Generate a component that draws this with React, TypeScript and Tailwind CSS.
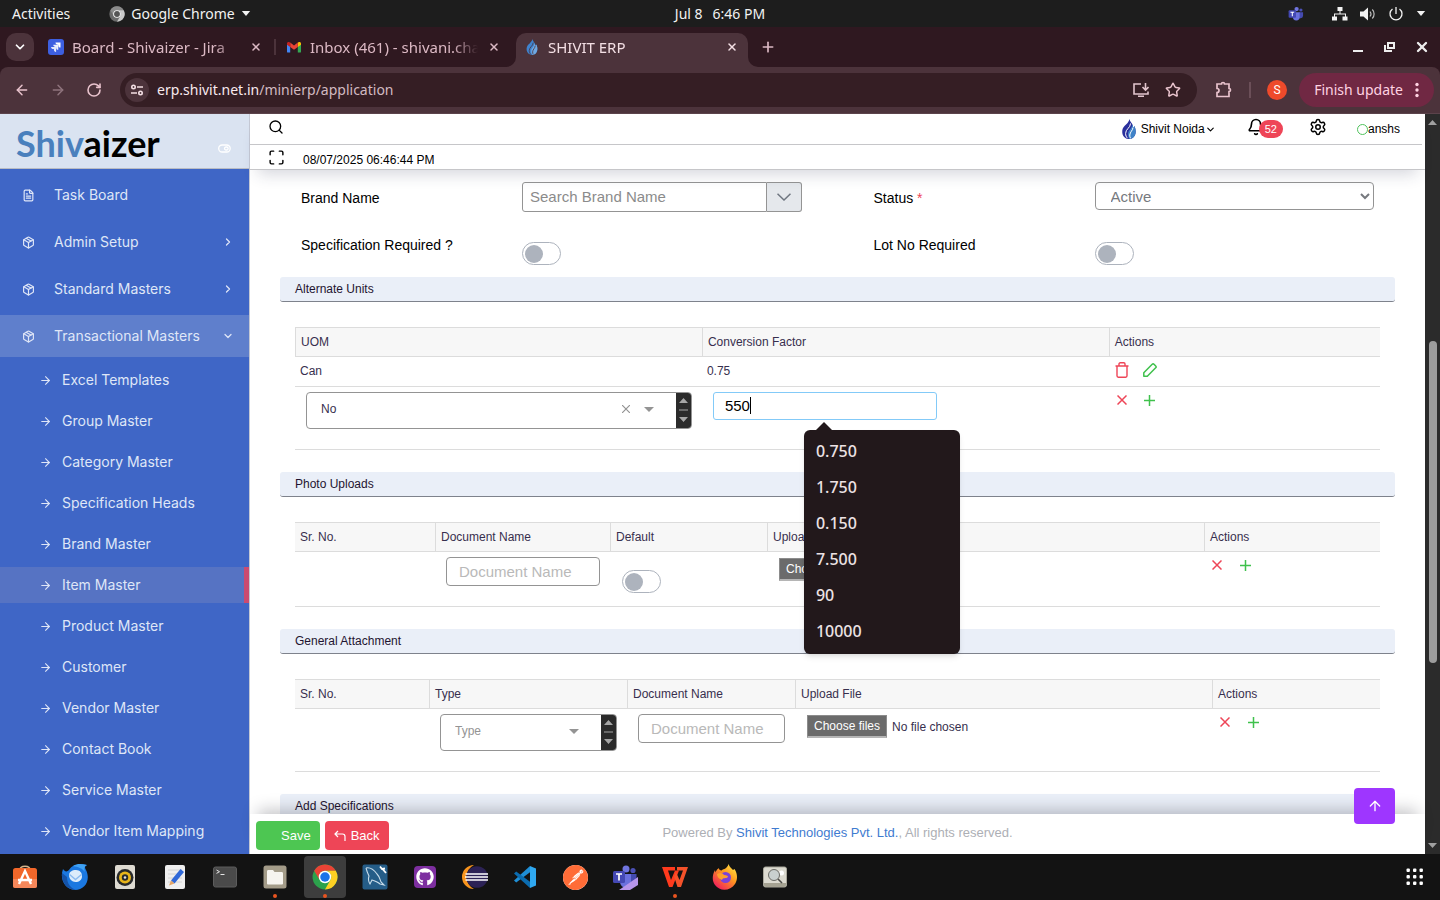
import type { ReactNode } from "react";
import {
  ArrowLeft,
  ArrowRight,
  ArrowUp,
  Bell,
  ChevronDown,
  ChevronRight,
  FileText,
  Maximize,
  Package,
  Plus,
  RotateCw,
  Search,
  Settings,
  Star,
  X,
} from "lucide-react";
import { SiPostman } from "react-icons/si";
import { FaGithub } from "react-icons/fa";

const MENU = ["Admin Setup", "Standard Masters"];

const SUB_MENU = [
  "Excel Templates",
  "Group Master",
  "Category Master",
  "Specification Heads",
  "Brand Master",
  "Item Master",
  "Product Master",
  "Customer",
  "Vendor Master",
  "Contact Book",
  "Service Master",
  "Vendor Item Mapping",
];

const SUGGESTIONS = ["0.750", "1.750", "0.150", "7.500", "90", "10000"];

/* ---------- logos ---------- */

function FlameLogo({ className, from, to, gap }: { className: string; from: string; to: string; gap: string }) {
  return (
    <svg viewBox="0 0 14 20" className={className} aria-hidden>
      <path d="M7.500 0c.3 2.500 2.500 4 3.200 6 .3 1 .4 1.800.3 2.500.8-.3 1.200-.8 1.400-1.500C13.600 9.500 14 12 13.500 14.500 12.800 18 10 20 7 20S1 18 .4 14.500C-.1 11.500.6 9 2.500 7 4.500 5 7 3 7.500 0z" fill={from} />
      <path d="M10 6c.5 3-3.800 5-4 9 0 2 .5 3.500 1.500 5 3-.2 5.300-2.200 6-5.500C14 12 13.600 9.500 12.400 7c-.2.700-.6 1.200-1.400 1.500.1-.7 0-1.500-.2-2.500z" fill={to} />
      <path d="M8.500 4.500C8.500 9 3.500 10 3.600 14.500c0 2 .7 3.500 1.900 4.700M11 8.500c-.2 3-3 4.500-3.200 7.500-.1 1.300.2 2.300.7 3.300" fill="none" stroke={gap} strokeWidth="1" />
    </svg>
  );
}

function JiraLogo() {
  return (
    <svg viewBox="0 0 16 16" className="size-4" aria-hidden>
      <rect width="16" height="16" rx="3" fill="#3d5fe0" />
      <path d="M7.500 3.500h5v5c-1.500 0-2.200-.9-2.200-2.300v-.5h-.6c-1.300 0-2.200-.8-2.200-2.200z" fill="#fff" />
      <path d="M5.300 5.700h5v5c-1.500 0-2.200-.9-2.200-2.300v-.5h-.6c-1.300 0-2.200-.8-2.200-2.200z" fill="#fff" opacity=".9" />
      <path d="M3.100 7.900h5v5c-1.500 0-2.200-.9-2.200-2.300v-.5h-.6c-1.300 0-2.200-.8-2.200-2.200z" fill="#fff" opacity=".85" />
    </svg>
  );
}

function GmailLogo() {
  return (
    <svg viewBox="0 0 16 16" className="size-4" aria-hidden>
      <path d="M1 4.500v8.200c0 .5.400.9.900.9h2.300V7z" fill="#4285f4" />
      <path d="M15 4.500v8.200c0 .5-.4.900-.9.900h-2.300V7z" fill="#34a853" />
      <path d="M11.800 3.600V8L15 5.700V4.500c0-1.400-1.400-2-2.400-1.300z" fill="#fbbc04" />
      <path d="M4.200 8V3.600L8 6.500l3.800-2.900V8L8 10.800z" fill="#ea4335" />
      <path d="M1 4.500v1.200L4.200 8V3.600l-.8-.4C2.400 2.500 1 3.100 1 4.500z" fill="#c5221f" />
    </svg>
  );
}

function ChromeLogo({ grey, className }: { grey?: boolean; className: string }) {
  const c = grey
    ? ["#8a8a8a", "#6b6b6b", "#c9c9c9", "#555555"]
    : ["#ea4335", "#2ca24c", "#fdd023", "#1a73e8"];
  return (
    <svg viewBox="0 0 48 48" className={className} aria-hidden>
      <circle cx="24" cy="24" r="23" fill={c[1]} />
      <path d="M4.080 12.500A23 23 0 0 1 43.920 12.500H24a11.500 11.500 0 0 0-9.960 17.250z" fill={c[0]} />
      <path d="M43.920 12.500A23 23 0 0 1 24 47l9.960-17.250A11.500 11.500 0 0 0 24 12.500z" fill={c[2]} />
      <circle cx="24" cy="24" r="11.500" fill="#fff" />
      <circle cx="24" cy="24" r="8.800" fill={c[3]} />
    </svg>
  );
}

function TeamsLogo({ className, preview }: { className: string; preview?: boolean }) {
  return (
    <svg viewBox="0 0 26 26" className={className} aria-hidden>
      <circle cx="21" cy="6.500" r="2.600" fill="#4b50b5" />
      <circle cx="14" cy="5" r="3.500" fill="#7075e0" />
      <path d="M18 10h6.500v6a4 4 0 0 1-4 4H18z" fill="#444ab0" />
      <path d="M8 10h11v8a5.500 5.500 0 0 1-11 0z" fill="#6a70dd" />
      <rect x="1" y="7" width="12" height="12" rx="1.500" fill="#4448b4" />
      <path d="M4 10h6M7 10v6.500" stroke="#fff" strokeWidth="1.700" />
      {preview && <path d="M7 26 26 13v8l-8 5z" fill="#b795ea" />}
    </svg>
  );
}

/* ---------- desktop top bar ---------- */

function DesktopBar() {
  return (
    <header className="relative flex h-[27px] shrink-0 items-center bg-[#1d1d1d] px-3 text-sm text-[#f2f2f2]">
      <button>Activities</button>
      <button className="ml-[39px] flex items-center gap-1.5">
        <ChromeLogo grey className="size-4" />
        Google Chrome
        <svg viewBox="0 0 10 6" className="h-[5px] w-[10px]" aria-hidden>
          <path d="M0 0h10L5 6z" fill="#f2f2f2" />
        </svg>
      </button>
      <div className="pointer-events-none absolute inset-x-0 flex justify-center gap-2.5">
        <span>Jul 8</span>
        <span>6:46 PM</span>
      </div>
      <div className="ml-auto flex items-center gap-3 pr-0.5">
        <TeamsLogo className="mr-4 size-4" />
        <svg viewBox="0 0 16 14" className="h-[14px] w-4" fill="#f2f2f2" aria-hidden>
          <path d="M5.500 0h5v4h-5zM0 9.500h5v4H0zM10.500 9.500h5v4h-5zM7.500 4h1v3h-1zM2 6.500h12v1H2zM2 7h1v3H2zM13 7h1v3h-1z" />
        </svg>
        <svg viewBox="0 0 16 14" className="h-[14px] w-4" aria-hidden>
          <path d="M0 4.500h3.500L8 .5v13L3.500 9.500H0z" fill="#f2f2f2" />
          <path d="M10 4.500c1.200 1.500 1.200 3.500 0 5M12.300 2.500c2.400 2.500 2.400 6.500 0 9" fill="none" stroke="#bbb" strokeWidth="1.200" />
        </svg>
        <svg viewBox="0 0 16 16" className="size-4" aria-hidden>
          <path d="M4.500 3a6 6 0 1 0 7 0M8 1v7" fill="none" stroke="#f2f2f2" strokeWidth="1.300" />
        </svg>
        <svg viewBox="0 0 10 6" className="h-[5px] w-[10px]" aria-hidden>
          <path d="M0 0h10L5 6z" fill="#f2f2f2" />
        </svg>
      </div>
    </header>
  );
}

/* ---------- browser chrome ---------- */

function Tab({ icon, title, active }: { icon: ReactNode; title: string; active?: boolean }) {
  return (
    <div
      className={
        active
          ? "relative flex h-full w-[232px] items-center gap-2 rounded-t-[10px] bg-[#4c333b] px-2 pb-1.5 text-[#f3dfe4]"
          : "flex h-full w-[232px] items-center gap-2 px-2 pb-1.5 text-[#dcb9c4]"
      }
    >
      {active && (
        <>
          <svg viewBox="0 0 10 10" className="absolute -left-2.5 bottom-0 size-2.5" aria-hidden>
            <path d="M10 0v10H0A10 10 0 0 0 10 0z" fill="#4c333b" />
          </svg>
          <svg viewBox="0 0 10 10" className="absolute -right-2.5 bottom-0 size-2.5" aria-hidden>
            <path d="M0 0v10h10A10 10 0 0 1 0 0z" fill="#4c333b" />
          </svg>
        </>
      )}
      <span className="flex w-4 shrink-0 justify-center">{icon}</span>
      <span className="min-w-0 flex-1 overflow-hidden whitespace-nowrap [mask-image:linear-gradient(to_right,#000_85%,transparent)]">
        {title}
      </span>
      <button aria-label="Close tab" className="flex w-4 shrink-0 justify-center">
        <X size={12} strokeWidth={3} />
      </button>
    </div>
  );
}

function TabStrip() {
  return (
    <div className="flex h-10 shrink-0 items-start bg-[#2f1820] pl-1.5 pt-1.5 text-[15px] leading-5">
      <button aria-label="Search tabs" className="mr-1.5 flex size-7 items-center justify-center rounded-[10px] bg-[#4c333b] text-white">
        <ChevronDown size={14} strokeWidth={3} />
      </button>
      <div className="flex h-full items-stretch">
        <Tab icon={<JiraLogo />} title="Board - Shivaizer - Jira" />
        <span className="mx-[2px] mt-1.5 h-4 w-0.5 bg-[#4c333b]" />
        <Tab icon={<GmailLogo />} title="Inbox (461) - shivani.chauhan" />
        <span className="w-1.5" />
        <Tab icon={<FlameLogo className="h-4 w-3" from="#3f83cf" to="#6fa8e2" gap="#4c333b" />} title="SHIVIT ERP" active />
      </div>
      <button aria-label="New tab" className="ml-3 mt-1.5 text-[#dcb9c4]">
        <Plus size={16} strokeWidth={2.5} />
      </button>
      <div className="ml-auto mt-1.5 flex gap-4 pr-2.5 text-[#eeeeee]">
        <button aria-label="Minimize">
          <svg viewBox="0 0 16 16" className="size-4" aria-hidden>
            <path d="M3 11h10v2H3z" fill="currentColor" />
          </svg>
        </button>
        <button aria-label="Restore">
          <svg viewBox="0 0 16 16" className="size-4" fill="none" stroke="currentColor" strokeWidth="2" aria-hidden>
            <path d="M6 4h6v5H6zM3 6v6h7" />
          </svg>
        </button>
        <button aria-label="Close window">
          <X size={16} strokeWidth={3.5} />
        </button>
      </div>
    </div>
  );
}

function Toolbar() {
  return (
    <div className="shrink-0 bg-[#2f1820]">
      <div className="flex h-[47px] items-center rounded-t-lg border-b border-[#5b434b] bg-[#4c333b] pl-3.5 pr-1.5 text-sm text-[#e9c3cd]">
        <button aria-label="Back" className="mr-5">
          <ArrowLeft size={16} strokeWidth={2.2} />
        </button>
        <button aria-label="Forward" className="mr-5 text-[#8f747d]">
          <ArrowRight size={16} strokeWidth={2.2} />
        </button>
        <button aria-label="Reload" className="mr-[18px]">
          <RotateCw size={16} strokeWidth={2.4} />
        </button>
        <div className="flex h-[34px] flex-1 items-center rounded-full bg-[#351e24] pl-[5px] pr-4">
          <span className="mr-2 flex size-6 items-center justify-center rounded-full bg-[#4c333b]">
            <svg viewBox="0 0 14 12" className="h-3 w-3.5" fill="none" stroke="#f3dfe4" strokeWidth="1.600" aria-hidden>
              <circle cx="3.500" cy="3" r="1.700" />
              <path d="M7 3h6M1 9h6" />
              <circle cx="10.500" cy="9" r="1.700" />
            </svg>
          </span>
          <p className="flex-1 text-[#d2bac1]">
            <span className="text-[#f8eaee]">erp.shivit.net.in</span>/minierp/application
          </p>
          <button aria-label="Install app" className="mr-4">
            <svg viewBox="0 0 16 16" className="size-4" fill="none" stroke="#e2c5cd" strokeWidth="1.600" aria-hidden>
              <path d="M8 2H1v10h14V9.500M5 14.200h6M12.500 1v6.500M9.500 5l3 3 3-3" />
            </svg>
          </button>
          <button aria-label="Bookmark">
            <Star size={16} strokeWidth={2.2} />
          </button>
        </div>
        <button aria-label="Extensions" className="ml-[18px]">
          <svg viewBox="0 0 18 18" className="size-[18px]" fill="none" stroke="currentColor" strokeWidth="1.700" aria-hidden>
            <path d="M2 3h4.500a1.500 1.500 0 0 1 3 0H14v4.500a1.500 1.500 0 0 1 0 3V15.500H2v-4a2 2 0 0 0 0-4z" />
          </svg>
        </button>
        <span className="mx-4 h-4 w-0.5 bg-[#6b4f58]" />
        <span className="flex size-5 items-center justify-center rounded-full bg-[#ee4a2b] font-['Roboto',sans-serif] text-xs text-white">S</span>
        <button className="ml-3 flex h-[34px] items-center gap-3 rounded-full bg-[#702843] px-[15px] text-[#ffd3e2]">
          Finish update
          <svg viewBox="0 0 4 16" className="h-4 w-1" fill="currentColor" aria-hidden>
            <circle cx="2" cy="2.500" r="1.700" />
            <circle cx="2" cy="8" r="1.700" />
            <circle cx="2" cy="13.500" r="1.700" />
          </svg>
        </button>
      </div>
    </div>
  );
}

/* ---------- ERP application ---------- */

function Sidebar() {
  return (
    <aside className="flex w-[250px] shrink-0 flex-col border-r border-[#c4c8d4] bg-[#3f66c6] font-['Inter',sans-serif] text-sm text-[#dfe6f7]">
      <div className="flex h-[55px] shrink-0 items-center justify-between border-b border-[#b9bcc4] bg-[#dae3f1] pl-4 pr-[18px]">
        <a href="#" className="mt-1 font-['Lato',sans-serif] text-[36px] font-bold leading-none text-black">
          <span className="text-[#4a80bd]">Shiv</span>aizer
        </a>
        <button aria-label="Toggle sidebar" className="mt-3.5">
          <svg viewBox="0 0 13 9" className="h-[9px] w-[13px]" fill="none" stroke="#fff" strokeWidth="1.300" aria-hidden>
            <rect x=".7" y="1" width="11.500" height="7" rx="3.500" />
            <rect x="6.500" y="3" width="3.600" height="3" rx="1.500" />
          </svg>
        </button>
      </div>
      <nav className="flex flex-col gap-[5px] pt-[5px]">
        <a href="#" className="flex h-[42px] items-center pl-[22px]">
          <FileText size={13} strokeWidth={2.2} className="mr-[19px]" />
          Task Board
        </a>
        {MENU.map((item) => (
          <a key={item} href="#" className="flex h-[42px] items-center pl-[22px] pr-[15px]">
            <Package size={13} strokeWidth={2.2} className="mr-[19px]" />
            <span className="flex-1">{item}</span>
            <ChevronRight size={12} strokeWidth={2.5} />
          </a>
        ))}
        <a href="#" className="flex h-[42px] items-center bg-[#5f7fcc] pl-[22px] pr-[15px]">
          <Package size={13} strokeWidth={2.2} className="mr-[19px]" />
          <span className="flex-1">Transactional Masters</span>
          <ChevronDown size={12} strokeWidth={2.5} />
        </a>
        {SUB_MENU.map((item) => (
          <a
            key={item}
            href="#"
            className={
              item === "Item Master"
                ? "flex h-9 items-center border-r-[5px] border-[#cb4a70] bg-[#5673c3] pl-[39px]"
                : "flex h-9 items-center pl-[39px]"
            }
          >
            <ArrowRight size={13} strokeWidth={2} className="mr-2.5" />
            {item}
          </a>
        ))}
      </nav>
    </aside>
  );
}

function AppHeader() {
  return (
    <header className="relative z-10 shrink-0 border-b border-[#c6c6c9] bg-white text-xs text-black shadow-[0_12px_16px_-8px_rgba(40,45,80,0.2)]">
      <div className="mr-[3px] flex h-[31px] items-center border-b border-[#c6c6c9] pl-[18px] pr-[22px]">
        <button aria-label="Search" className="mb-1">
          <Search size={16} strokeWidth={2} />
        </button>
        <button className="ml-auto flex items-center">
          <FlameLogo className="mr-[5px] h-5 w-3.5" from="#2a2f9c" to="#3f83c8" gap="#fff" />
          Shivit Noida
          <ChevronDown size={11} strokeWidth={2.5} />
        </button>
        <button aria-label="Notifications" className="ml-[31px] flex items-center">
          <Bell size={18} strokeWidth={2.2} className="mb-1" />
          <span className="-ml-1.5 flex h-[18px] items-center rounded-full bg-[#ee4557] px-[6px] text-[11px] text-white">52</span>
        </button>
        <button aria-label="Settings" className="mb-1 ml-[26px]">
          <Settings size={18} strokeWidth={2} />
        </button>
        <button className="ml-[30px] flex items-center">
          <span className="size-[11px] rounded-full border border-[#4fc25b]" />
          anshs
        </button>
      </div>
      <div className="flex h-6 items-center gap-[18px] pl-[18px]">
        <Maximize size={17} strokeWidth={2} />
        <time className="pt-[5px]">08/07/2025 06:46:44 PM</time>
      </div>
    </header>
  );
}

function Toggle({ id, label, className = "" }: { id?: string; label?: string; className?: string }) {
  return (
    <input
      type="checkbox"
      id={id}
      aria-label={label}
      className={`flex h-[23px] w-[39px] appearance-none items-center rounded-full border border-[#adb3bd] bg-white pl-0.5 before:size-[18px] before:rounded-full before:bg-[#adb3bd] ${className}`}
    />
  );
}

function Field({ id, label, required, children }: { id: string; label: string; required?: boolean; children: ReactNode }) {
  return (
    <div className="flex items-start">
      <label htmlFor={id} className="mt-1.5 w-[221px] shrink-0 text-sm leading-5 text-black">
        {label} {required && <span className="text-[#ee4557]">*</span>}
      </label>
      {children}
    </div>
  );
}

function SectionTitle({ children }: { children: ReactNode }) {
  return (
    <h2 className="h-[25px] rounded-[3px] border-b border-[#7e828c] bg-[#eaeff8] px-[15px] text-xs leading-6 text-[#1f1430]">
      {children}
    </h2>
  );
}

function Th({ children, className = "border-l" }: { children: ReactNode; className?: string }) {
  return (
    <th className={`h-[30px] border-y border-[#dcdcdc] bg-[#f7f7f7] pl-[5px] text-left font-normal ${className}`}>
      {children}
    </th>
  );
}

function Td({ children, className = "h-[63px] align-top" }: { children?: ReactNode; className?: string }) {
  return <td className={`border-b border-[#dcdcdc] ${className}`}>{children}</td>;
}

function DataTable({ children }: { children: ReactNode }) {
  return (
    <div className="px-[15px] pb-[22px] pt-[25px]">
      <table className="w-full table-fixed border-separate border-spacing-0 text-xs text-[#372f4e]">{children}</table>
    </div>
  );
}

function SearchSelect({ label, value, clearable }: { label: string; value: string; clearable?: boolean }) {
  return (
    <div className="ml-[11px] mr-2.5 mt-[5px] flex h-[37px] items-center overflow-hidden rounded border border-[#949494] bg-white pb-px">
      <select
        aria-label={label}
        className={`h-full min-w-0 flex-1 appearance-none pb-0.5 pl-3.5 text-xs ${clearable ? "text-[#372f4e]" : "text-[#949494]"}`}
      >
        <option>{value}</option>
      </select>
      {clearable && (
        <button type="button" aria-label="Clear" className="mb-0.5 mr-3.5 text-[#949494]">
          <svg viewBox="0 0 10 10" className="size-2" stroke="currentColor" strokeWidth="1.500" aria-hidden>
            <path d="M0 0l10 10M10 0L0 10" />
          </svg>
        </button>
      )}
      <svg viewBox="0 0 10 5" className="mb-0.5 mr-[22px] h-[5px] w-[10px]" aria-hidden>
        <path d="M0 0h10L5 5z" fill="#949494" />
      </svg>
      <span className="flex h-9 w-[15px] items-center justify-center bg-[#2b2b2b]">
        <svg viewBox="0 0 9 24" className="h-6 w-[9px]" fill="#a6a6a6" aria-hidden>
          <path d="M0 5h9L4.500 0zM0 11.500h9v1H0zM0 19h9l-4.500 5z" />
        </svg>
      </span>
    </div>
  );
}

function DocumentName() {
  return (
    <div className="ml-[11px] mr-2.5 mt-[5px]">
      <input
        aria-label="Document Name"
        placeholder="Document Name"
        className="h-[29px] w-full rounded border border-[#949494] bg-white px-3 text-[15px] placeholder:text-[#b9b9b9]"
      />
    </div>
  );
}

function FileField({ label }: { label: string }) {
  return (
    <label className="ml-3 mt-[6px] flex items-center gap-[5px] whitespace-nowrap">
      <span className="border border-[#8c8c8c] border-b-2 border-b-[#b5b5b5] bg-[#6b6b6b] px-1.5 leading-5 text-white">
        Choose files
      </span>
      No file chosen
      <input type="file" multiple aria-label={label} className="sr-only" />
    </label>
  );
}

function RowActions() {
  return (
    <div className="flex gap-3 pl-[5px] pt-[5px]">
      <button type="button" aria-label="Cancel row" className="flex size-4 items-center justify-center text-[#ee4557]">
        <svg viewBox="0 0 10 10" className="size-2.5" stroke="currentColor" strokeWidth="1.500" aria-hidden>
          <path d="M.5.5l9 9M9.500.5l-9 9" />
        </svg>
      </button>
      <button type="button" aria-label="Add row" className="flex size-4 items-center justify-center text-[#3fc14c]">
        <svg viewBox="0 0 11 11" className="size-[11px]" stroke="currentColor" strokeWidth="1.500" aria-hidden>
          <path d="M5.500 0v11M0 5.500h11" />
        </svg>
      </button>
    </div>
  );
}

function Suggestions() {
  return (
    <div className="absolute left-[91px] top-[38px] z-10 w-[156px] rounded-md bg-[#22181b] py-1 shadow-md">
      <svg viewBox="0 0 16 8" className="absolute -top-2 left-3 h-2 w-4" aria-hidden>
        <path d="M0 8l8-8 8 8z" fill="#22181b" />
      </svg>
      <ul>
        {SUGGESTIONS.map((value) => (
          <li key={value} className="h-9 px-3 font-['Noto_Sans',sans-serif] text-base font-medium leading-[34px] text-[#ece2e4]">
            {value}
          </li>
        ))}
      </ul>
    </div>
  );
}

function AlternateUnits() {
  return (
    <DataTable>
      <thead>
        <tr>
          <Th className="w-3/8 border-l">UOM</Th>
          <Th className="w-3/8 border-l">Conversion Factor</Th>
          <Th>Actions</Th>
        </tr>
      </thead>
      <tbody>
        <tr>
          <Td className="h-[30px] pb-0.5 pl-[5px]">Can</Td>
          <Td className="h-[30px] pb-0.5 pl-[5px]">0.75</Td>
          <Td className="h-[30px] align-top">
            <div className="flex gap-3 pl-[5px] pt-[5px]">
              <button type="button" aria-label="Delete row" className="flex size-4 items-center justify-center">
                <svg viewBox="0 0 14 16" className="h-4 w-3.5" fill="none" stroke="#ee4557" strokeWidth="1.400" aria-hidden>
                  <path d="M.5 4h13M2 4v9.800c0 .8.500 1.400 1.300 1.400h7.400c.8 0 1.300-.6 1.300-1.400V4M4 4V2c0-.7.500-1.200 1.200-1.200h3.600c.7 0 1.200.5 1.200 1.200v2" />
                </svg>
              </button>
              <button type="button" aria-label="Edit row" className="flex size-4 items-center justify-center">
                <svg viewBox="0 0 14 14" className="size-3.5" fill="none" stroke="#3fc14c" strokeWidth="1.500" strokeLinejoin="round" aria-hidden>
                  <path d="M.8 13.200v-3.500L9.200 1.300c.6-.6 1.200-.6 1.800 0l1.700 1.700c.6.6.6 1.200 0 1.800l-8.400 8.400z" />
                </svg>
              </button>
            </div>
          </Td>
        </tr>
        <tr>
          <Td>
            <SearchSelect label="UOM" value="No" clearable />
          </Td>
          <Td>
            <div className="relative ml-[11px] mt-[5px] w-56">
              <input
                aria-label="Conversion Factor"
                defaultValue="550"
                className="h-7 w-full rounded-[3px] border border-[#83caf8] bg-white px-[11px] pb-0.5 text-[15px] text-black outline-none"
              />
              <span className="absolute left-[37px] top-[5px] h-[17px] w-px bg-black" />
              <Suggestions />
            </div>
          </Td>
          <Td>
            <RowActions />
          </Td>
        </tr>
      </tbody>
    </DataTable>
  );
}

function PhotoUploads() {
  return (
    <DataTable>
      <thead>
        <tr>
          <Th className="w-[140px]">Sr. No.</Th>
          <Th className="w-[175px] border-l">Document Name</Th>
          <Th className="w-[157px] border-l">Default</Th>
          <Th>Upload File</Th>
          <Th className="w-[176px] border-l">Actions</Th>
        </tr>
      </thead>
      <tbody>
        <tr>
          <Td className="h-[55px]" />
          <Td className="h-[55px] align-top">
            <DocumentName />
          </Td>
          <Td className="h-[55px] align-top">
            <Toggle label="Default" className="ml-3 mt-[18px]" />
          </Td>
          <Td className="h-[55px] align-top">
            <FileField label="Upload photo" />
          </Td>
          <Td className="h-[55px] align-top">
            <RowActions />
          </Td>
        </tr>
      </tbody>
    </DataTable>
  );
}

function GeneralAttachment() {
  return (
    <DataTable>
      <thead>
        <tr>
          <Th className="w-[134px]">Sr. No.</Th>
          <Th className="w-[198px] border-l">Type</Th>
          <Th className="w-[168px] border-l">Document Name</Th>
          <Th>Upload File</Th>
          <Th className="w-[168px] border-l">Actions</Th>
        </tr>
      </thead>
      <tbody>
        <tr>
          <Td />
          <Td>
            <SearchSelect label="Type" value="Type" />
          </Td>
          <Td>
            <DocumentName />
          </Td>
          <Td>
            <FileField label="Upload attachment" />
          </Td>
          <Td>
            <RowActions />
          </Td>
        </tr>
      </tbody>
    </DataTable>
  );
}

function ItemForm() {
  return (
    <form className="min-h-0 flex-1 overflow-hidden px-[30px] pt-3">
      <div className="grid grid-cols-2 gap-x-[72px] px-[21px]">
        <div className="h-[47px]">
          <Field id="brand" label="Brand Name">
            <div className="flex h-[30px] flex-1">
              <input
                id="brand"
                placeholder="Search Brand Name"
                className="min-w-0 flex-1 rounded-l-[3px] border border-[#949494] bg-white px-[7px] text-[15px] placeholder:text-[#8b8b8b]"
              />
              <button
                type="button"
                aria-label="Show brands"
                className="flex w-[35px] items-center justify-center rounded-r-[3px] border border-l-0 border-[#949494] bg-[#e5e8ec] text-[#6f7680]"
              >
                <svg viewBox="0 0 14 8" className="h-2 w-3.5" fill="none" stroke="currentColor" strokeWidth="1.500" aria-hidden>
                  <path d="M.5.800l6.500 6.200 6.500-6.200" />
                </svg>
              </button>
            </div>
          </Field>
        </div>
        <div className="h-[47px]">
          <Field id="status" label="Status" required>
            <select id="status" className="h-7 flex-1 rounded border border-[#949494] bg-white pl-[11px] text-[15px] text-[#76797e]">
              <option>Active</option>
            </select>
          </Field>
        </div>
        <Field id="spec" label="Specification Required ?">
          <Toggle id="spec" className="mb-3 mt-[13px]" />
        </Field>
        <Field id="lot" label="Lot No Required">
          <Toggle id="lot" className="mb-3 mt-[13px]" />
        </Field>
      </div>
      <SectionTitle>Alternate Units</SectionTitle>
      <AlternateUnits />
      <SectionTitle>Photo Uploads</SectionTitle>
      <PhotoUploads />
      <SectionTitle>General Attachment</SectionTitle>
      <GeneralAttachment />
      <SectionTitle>Add Specifications</SectionTitle>
    </form>
  );
}

function AppFooter() {
  return (
    <footer className="relative grid h-10 shrink-0 grid-cols-[1fr_auto_1fr] items-center bg-white px-1.5 text-[13px] shadow-[0_-12px_16px_-8px_rgba(20,20,30,0.25)]">
      <div className="flex gap-[5px] pt-[3px]">
        <button className="h-[29px] rounded bg-[#4dc652] pl-[25px] pr-[9px] text-white">Save</button>
        <button className="flex h-[29px] items-center gap-[5px] rounded bg-[#ee4557] px-[9px] text-white">
          <svg viewBox="0 0 12 12" className="size-3" fill="none" stroke="currentColor" strokeWidth="1.200" aria-hidden>
            <path d="M4 1L1 4l3 3M1 4h7.500c1.500 0 2.500 1 2.500 2.500V11" />
          </svg>
          Back
        </button>
      </div>
      <p className="pb-0.5 text-[#adafb5]">
        Powered By{" "}
        <a href="#" className="text-[#3f7bd0]">
          Shivit Technologies Pvt. Ltd.
        </a>
        , All rights reserved.
      </p>
      <button
        aria-label="Back to top"
        className="absolute bottom-[30px] right-[30px] flex h-9 w-[41px] items-center justify-center rounded bg-[#9e36ff] text-white"
      >
        <ArrowUp size={16} strokeWidth={2} />
      </button>
    </footer>
  );
}

function Scrollbar() {
  return (
    <div aria-hidden className="flex w-[15px] shrink-0 flex-col items-center bg-[#2b2b2b] py-1.5">
      <svg viewBox="0 0 9 5" className="h-[5px] w-[9px]">
        <path d="M0 5h9L4.500 0z" fill="#a0a0a0" />
      </svg>
      <div className="flex w-2 flex-1 flex-col">
        <span className="flex-[216]" />
        <span className="flex-[322] rounded-full bg-[#9c9c9c]" />
        <span className="flex-[180]" />
      </div>
      <svg viewBox="0 0 9 5" className="h-[5px] w-[9px]">
        <path d="M0 0h9L4.500 5z" fill="#a0a0a0" />
      </svg>
    </div>
  );
}

/* ---------- dock ---------- */

const DOCK: { name: string; icon: ReactNode; running?: boolean; focused?: boolean }[] = [
  {
    name: "Software",
    icon: (
      <svg viewBox="0 0 26 26" className="size-[26px]">
        <path d="M8 6c0-5 10-5 10 0" fill="none" stroke="#d9b58a" strokeWidth="1.500" />
        <rect x="1" y="4" width="24" height="20" rx="2.500" fill="#f2672a" />
        <path d="M1 15h24v6.500a2.500 2.500 0 0 1-2.500 2.500h-19A2.500 2.500 0 0 1 1 21.500z" fill="#f5875a" />
        <path d="M7 20l6-13 6 13M6 16h14" fill="none" stroke="#fff" strokeWidth="2.400" />
      </svg>
    ),
  },
  {
    name: "Thunderbird",
    icon: (
      <svg viewBox="0 0 28 28" className="size-7">
        <path d="M2 6c2 3 4 3 6 1 3-5 9-7 18-5-3 2-2 3-1 5 5 10-1 20-11 20C5 27-2 17 2 6z" fill="#1b78e0" />
        <path d="M1 10c-1 9 5 17 14 17-6-2-9-7-9-13z" fill="#1553a8" />
        <path d="M12 3c5-3 9-2 14-1-3 1-3 4-2 7-3-4-7-5-12-6z" fill="#3fa2f4" />
        <path d="M8 12c0-3 3-5 7-5s6 3 6 6c0 4-3 6-6.500 6S8 16 8 12z" fill="#dcecfb" />
        <path d="M8.500 11.500l6 5 6-5" fill="none" stroke="#8dbcf0" strokeWidth="1.500" />
      </svg>
    ),
  },
  {
    name: "Rhythmbox",
    icon: (
      <svg viewBox="0 0 24 26" className="h-[26px] w-6">
        <rect x="2" y="1" width="20" height="24" rx="2" fill="#dedbd2" />
        <circle cx="12" cy="13.500" r="8.500" fill="#27292b" />
        <circle cx="12" cy="13.500" r="6" fill="#e8b51a" />
        <circle cx="12" cy="13.500" r="3.200" fill="#27292b" />
        <circle cx="12" cy="13.500" r="1.300" fill="#e0e0e0" />
      </svg>
    ),
  },
  {
    name: "Text Editor",
    icon: (
      <svg viewBox="0 0 24 26" className="h-[26px] w-6">
        <rect x="2" y="1" width="20" height="24" rx="2" fill="#efefef" />
        <path d="M5 6h14M5 10h14M5 14h14M5 18h14" stroke="#d2d2d2" />
        <path d="M8 16.500L17.500 5l3.500 3-9.500 11.500z" fill="#2f68d8" />
        <path d="M8 16.500l3.500 3L6 21.500z" fill="#e2a467" />
      </svg>
    ),
  },
  {
    name: "Terminal",
    icon: (
      <svg viewBox="0 0 24 22" className="h-[22px] w-6">
        <rect x=".5" y="1" width="23" height="20" rx="2" fill="#4a4a4a" stroke="#5c5c5c" />
        <path d="M3.500 4l3 1.700-3 1.700M7.500 8.500h4" fill="none" stroke="#e5e5e5" />
      </svg>
    ),
  },
  {
    name: "Files",
    running: true,
    icon: (
      <svg viewBox="0 0 24 24" className="size-6">
        <rect x=".5" y=".5" width="23" height="23" rx="2.500" fill="#a49c89" />
        <path d="M4 18.500V6.500C4 5.500 4.500 5 5.500 5H10l1.500 2h7c1 0 1.500.5 1.500 1.500v10c0 .8-.5 1-1.500 1h-13c-1 0-1.500-.2-1.500-1z" fill="#f6f4ef" />
      </svg>
    ),
  },
  { name: "Google Chrome", running: true, focused: true, icon: <ChromeLogo className="size-[26px]" /> },
  {
    name: "MySQL Workbench",
    icon: (
      <svg viewBox="0 0 26 26" className="size-[26px]">
        <rect x=".5" y=".5" width="25" height="25" rx="2" fill="#255d88" />
        <path d="M4 4c4-1 8 2 11 6 3 3 3 6 4 8l3 3-4-1M4 4c1 4 2 6 3 8-1 3-1 5 1 8l2-4c3 1 6 2 8 4" fill="none" stroke="#c8dcea" strokeWidth="1.100" />
        <path d="M18 2.500l2 2.500 3-.5M20.500 5l3.500 4" stroke="#fff" strokeWidth="1.800" fill="none" />
      </svg>
    ),
  },
  {
    name: "GitHub Desktop",
    icon: (
      <span className="flex size-[22px] items-center justify-center rounded bg-[#7d2fa0]">
        <FaGithub size={18} color="#fff" />
      </span>
    ),
  },
  {
    name: "Eclipse",
    icon: (
      <svg viewBox="0 0 26 26" className="size-[26px]">
        <path d="M12 1A12 12 0 0 0 12 25 13.500 13.500 0 0 1 12 1z" fill="#f7941e" />
        <circle cx="15" cy="13" r="10.800" fill="#2c2255" />
        <path d="M3.500 10h22.600M3 13h23M3.500 16h22.600" stroke="#fff" strokeWidth="1.500" />
      </svg>
    ),
  },
  {
    name: "VS Code",
    icon: (
      <svg viewBox="0 0 24 24" className="size-6">
        <path d="M17 1L1 15.500l2.200 2L17 7.200z" fill="#1f8fd6" />
        <path d="M17 23L1 8.500l2.200-2L17 16.800z" fill="#0b6cb0" />
        <path d="M17 1l6 2.500v17L17 23z" fill="#2fa8f0" />
      </svg>
    ),
  },
  {
    name: "Postman",
    icon: (
      <span className="flex rounded-full bg-white">
        <SiPostman size={25} color="#ff6c37" />
      </span>
    ),
  },
  { name: "Teams", icon: <TeamsLogo preview className="size-[26px]" /> },
  {
    name: "WPS Office",
    running: true,
    icon: (
      <svg viewBox="0 0 26 20" className="h-5 w-[26px]">
        <path d="M0 0h13v3.500H6L9 13l4-9.500h4L10.500 20H7z" fill="#ff3a1d" />
        <path d="M15 0h11l-7 20h-3.500L12 9.500l2-4.500 3.500 8L21 3.500h-6z" fill="#f5522a" />
      </svg>
    ),
  },
  {
    name: "Firefox",
    icon: (
      <svg viewBox="0 0 26 26" className="size-[26px]">
        <defs>
          <linearGradient id="fox" x1="1" y1="0" x2="0.200" y2="1">
            <stop offset="0" stopColor="#fff44f" />
            <stop offset=".45" stopColor="#ff9a1e" />
            <stop offset="1" stopColor="#f0185f" />
          </linearGradient>
        </defs>
        <path d="M16.500 0c1 3 3 4 4.500 6l1.500-1c3.500 5 3 11 .5 15-4.500 7-15 8-20 1C0 17 0 11 3 6l.5 2.500C5 5 6 5 6.500 4c.5 1.500 1.500 2.500 3 2.500C12 4.500 15 5 16.500 0z" fill="url(#fox)" />
        <circle cx="13.500" cy="13.500" r="5.500" fill="#7b42d8" />
        <path d="M5 10c3-2 6-1 7 1 3 0 4 1 4 2-2 2-5 0-6 3-3-1-5-3-5-6z" fill="#ffa02c" />
      </svg>
    ),
  },
  {
    name: "Image Viewer",
    icon: (
      <svg viewBox="0 0 24 22" className="h-[22px] w-6">
        <rect x=".5" y="1" width="23" height="20" rx="2" fill="#dcdad0" stroke="#aaa89c" />
        <path d="M1 17h22v2a2 2 0 0 1-2 2H3a2 2 0 0 1-2-2z" fill="#a5a292" />
        <circle cx="18.500" cy="7" r="2.500" fill="#fff" />
        <circle cx="11" cy="9" r="5.500" fill="#c9d0cf" stroke="#6b6b66" />
        <path d="M15 13l4 4" stroke="#4a4a46" strokeWidth="1.600" />
      </svg>
    ),
  },
];

function Dock() {
  return (
    <nav className="flex h-[46px] shrink-0 items-center bg-[#131313] pr-4">
      {DOCK.map((app) => (
        <div key={app.name} className="flex w-[50px] justify-center">
          <button
            aria-label={app.name}
            className={
              app.focused
                ? "relative flex size-[42px] items-center justify-center rounded bg-[#3d3d3d]"
                : "relative flex size-[42px] items-center justify-center"
            }
          >
            {app.icon}
            {app.running && <span className="absolute bottom-0 size-1 rounded-full bg-[#e95420]" />}
          </button>
        </div>
      ))}
      <button aria-label="Show applications" className="ml-auto">
        <svg viewBox="0 0 18 18" className="size-[18px]" fill="#fff" aria-hidden>
          {[0.5, 7, 13.5].map((y) => [0.5, 7, 13.5].map((x) => <rect key={`${x}-${y}`} x={x} y={y} width="3.400" height="3.400" rx="1" />))}
        </svg>
      </button>
    </nav>
  );
}

export default function App() {
  return (
    <div className="flex h-screen flex-col overflow-hidden bg-[#131313] font-['Noto_Sans',sans-serif]">
      <DesktopBar />
      <TabStrip />
      <Toolbar />
      <div className="flex min-h-0 flex-1 overflow-hidden bg-white font-['Liberation_Sans',Arial,sans-serif]">
        <Sidebar />
        <main className="flex min-w-0 flex-1 flex-col">
          <AppHeader />
          <ItemForm />
          <AppFooter />
        </main>
        <Scrollbar />
      </div>
      <Dock />
    </div>
  );
}
